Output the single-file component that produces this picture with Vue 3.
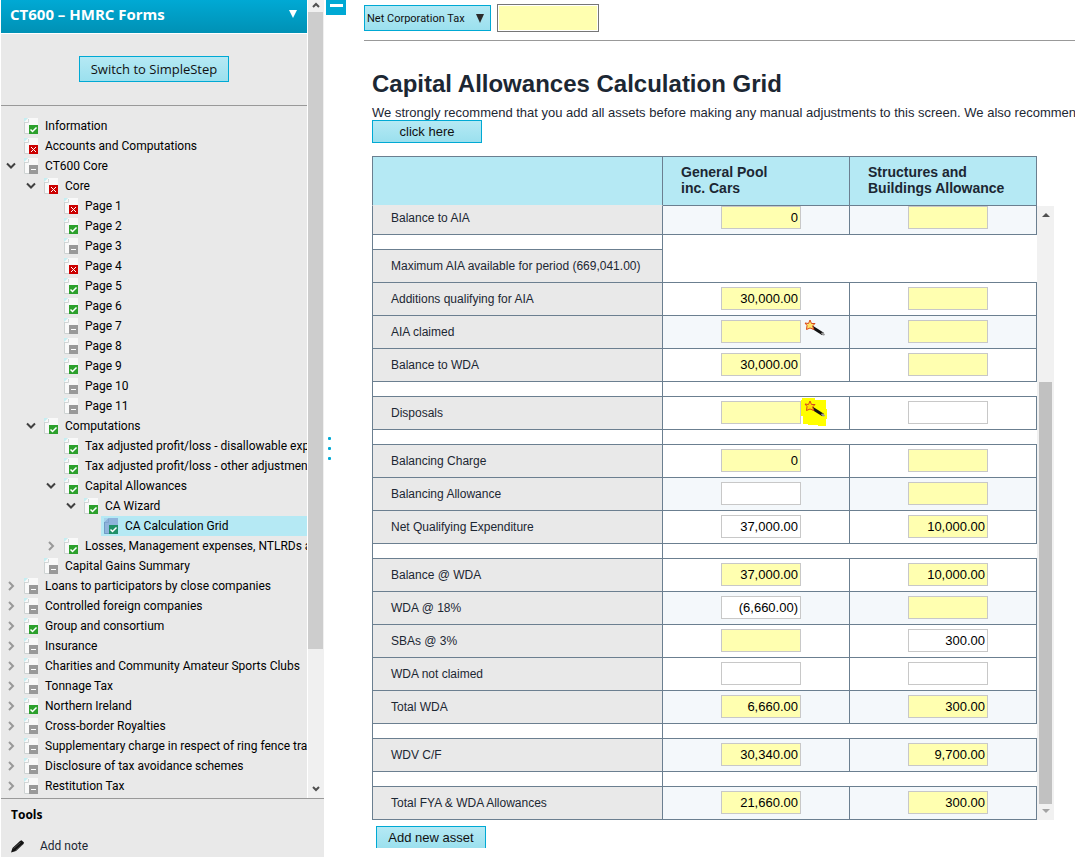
<script setup>
import { ref } from 'vue';

const tree = ref([
  { depth: 0, label: 'Information', status: 'done' },
  { depth: 0, label: 'Accounts and Computations', status: 'error' },
  { depth: 0, label: 'CT600 Core', status: 'none', arrow: 'open' },
  { depth: 1, label: 'Core', status: 'error', arrow: 'open' },
  { depth: 2, label: 'Page 1', status: 'error' },
  { depth: 2, label: 'Page 2', status: 'done' },
  { depth: 2, label: 'Page 3', status: 'none' },
  { depth: 2, label: 'Page 4', status: 'error' },
  { depth: 2, label: 'Page 5', status: 'done' },
  { depth: 2, label: 'Page 6', status: 'done' },
  { depth: 2, label: 'Page 7', status: 'none' },
  { depth: 2, label: 'Page 8', status: 'none' },
  { depth: 2, label: 'Page 9', status: 'done' },
  { depth: 2, label: 'Page 10', status: 'none' },
  { depth: 2, label: 'Page 11', status: 'none' },
  { depth: 1, label: 'Computations', status: 'done', arrow: 'open' },
  { depth: 2, label: 'Tax adjusted profit/loss - disallowable expenses', status: 'done' },
  { depth: 2, label: 'Tax adjusted profit/loss - other adjustments', status: 'done' },
  { depth: 2, label: 'Capital Allowances', status: 'done', arrow: 'open' },
  { depth: 3, label: 'CA Wizard', status: 'done', arrow: 'open' },
  { depth: 4, label: 'CA Calculation Grid', status: 'done', selected: true },
  { depth: 2, label: 'Losses, Management expenses, NTLRDs and', status: 'done', arrow: 'closed' },
  { depth: 1, label: 'Capital Gains Summary', status: 'none' },
  { depth: 0, label: 'Loans to participators by close companies', status: 'none', arrow: 'closed' },
  { depth: 0, label: 'Controlled foreign companies', status: 'none', arrow: 'closed' },
  { depth: 0, label: 'Group and consortium', status: 'done', arrow: 'closed' },
  { depth: 0, label: 'Insurance', status: 'none', arrow: 'closed' },
  { depth: 0, label: 'Charities and Community Amateur Sports Clubs', status: 'none', arrow: 'closed' },
  { depth: 0, label: 'Tonnage Tax', status: 'none', arrow: 'closed' },
  { depth: 0, label: 'Northern Ireland', status: 'done', arrow: 'closed' },
  { depth: 0, label: 'Cross-border Royalties', status: 'none', arrow: 'closed' },
  { depth: 0, label: 'Supplementary charge in respect of ring fence trades', status: 'none', arrow: 'closed' },
  { depth: 0, label: 'Disclosure of tax avoidance schemes', status: 'none', arrow: 'closed' },
  { depth: 0, label: 'Restitution Tax', status: 'none', arrow: 'closed' },
]);

// calc: yellow calculated cells, tint: pale blue row, gap: spacer row
const rows = ref([
  { label: 'Balance to AIA', tint: true, cells: [{ value: '0', calc: true }, { value: '', calc: true }] },
  { gap: true, open: true },
  { label: 'Maximum AIA available for period (669,041.00)', merged: true },
  { label: 'Additions qualifying for AIA', cells: [{ value: '30,000.00', calc: true }, { value: '', calc: true }] },
  { label: 'AIA claimed', tint: true, cells: [{ value: '', calc: true, wand: true }, { value: '', calc: true }] },
  { label: 'Balance to WDA', cells: [{ value: '30,000.00', calc: true }, { value: '', calc: true }] },
  { gap: true },
  { label: 'Disposals', cells: [{ value: '', calc: true, wand: true, marked: true }, { value: '' }] },
  { gap: true },
  { label: 'Balancing Charge', cells: [{ value: '0', calc: true }, { value: '', calc: true }] },
  { label: 'Balancing Allowance', tint: true, cells: [{ value: '' }, { value: '', calc: true }] },
  { label: 'Net Qualifying Expenditure', cells: [{ value: '37,000.00' }, { value: '10,000.00', calc: true }] },
  { gap: true },
  { label: 'Balance @ WDA', cells: [{ value: '37,000.00', calc: true }, { value: '10,000.00', calc: true }] },
  { label: 'WDA @ 18%', tint: true, cells: [{ value: '(6,660.00)' }, { value: '', calc: true }] },
  { label: 'SBAs @ 3%', cells: [{ value: '', calc: true }, { value: '300.00' }] },
  { label: 'WDA not claimed', cells: [{ value: '' }, { value: '' }] },
  { label: 'Total WDA', tint: true, cells: [{ value: '6,660.00', calc: true }, { value: '300.00', calc: true }] },
  { gap: true },
  { label: 'WDV C/F', tint: true, cells: [{ value: '30,340.00', calc: true }, { value: '9,700.00', calc: true }] },
  { gap: true },
  { label: 'Total FYA & WDA Allowances', tint: true, cells: [{ value: '21,660.00', calc: true }, { value: '300.00', calc: true }] },
]);

const columns = ['General Pool inc. Cars', 'Structures and Buildings Allowance'];
</script>

<template>
  <div class="app">
    <aside class="sidebar">
      <div class="sidebar-top">
        <div class="sidebar-body">
          <header class="sidebar-title">
            <h2>CT600 – HMRC Forms</h2>
            <button type="button" class="title-toggle" aria-label="Choose forms">
              <svg width="8" height="8" viewBox="0 0 8 8"><path d="M0 0h8L4 8z" fill="#fff" /></svg>
            </button>
          </header>
          <div class="switch">
            <button type="button" class="btn switch-btn">Switch to SimpleStep</button>
          </div>
          <ul class="tree">
            <li
              v-for="item in tree"
              :key="item.label"
              class="tree-row"
              :style="{ paddingLeft: item.depth * 20 + 'px' }"
            >
              <button
                v-if="item.arrow"
                type="button"
                class="tree-arrow"
                :aria-label="item.label"
                :aria-expanded="item.arrow === 'open'"
              >
                <svg v-if="item.arrow === 'open'" width="10" height="10" viewBox="0 0 10 10">
                  <path d="M1 2.500l4 4 4-4" fill="none" stroke="#404040" stroke-width="2" />
                </svg>
                <svg v-else width="10" height="10" viewBox="0 0 10 10">
                  <path d="M3 1l4 4-4 4" fill="none" stroke="#999" stroke-width="2" />
                </svg>
              </button>
              <span v-else class="tree-arrow"></span>
              <a href="#" class="tree-link" :class="{ selected: item.selected }">
                <svg class="doc" width="14" height="16" viewBox="0 0 14 16" aria-hidden="true">
                  <path d="M4 0h10v16H0V4z" :fill="item.selected ? '#8fb4dc' : '#f9f9f9'" />
                  <path d="M.5 4v11.500H5" fill="none" :stroke="item.selected ? '#6f9cc4' : '#cdd2d2'" />
                  <path d="M0 0h4L0 4z" :fill="item.selected ? '#a8d4ec' : '#c4eef2'" />
                  <path d="M1 4.500h3.500V1" fill="none" :stroke="item.selected ? '#7fa6cf' : '#d2d6d6'" />
                  <g v-if="item.status === 'done'">
                    <path d="M5 7h9v9H5z" :fill="item.selected ? '#1f9067' : '#2ca02c'" />
                    <path d="M6.500 11.500l2 2 4-4" fill="none" stroke="#fff" stroke-width="1.500" />
                  </g>
                  <g v-else-if="item.status === 'error'">
                    <path d="M5 7h9v9H5z" fill="#cc0000" />
                    <path d="M7 9l5 5M12 9l-5 5" stroke="#fff" />
                  </g>
                  <g v-else>
                    <path d="M5 7h9v9H5z" fill="#999" />
                    <path d="M7 11.500h5" stroke="#fff" />
                  </g>
                </svg>
                <span>{{ item.label }}</span>
              </a>
            </li>
          </ul>
        </div>
        <div class="side-scroll" aria-hidden="true">
          <svg class="side-up" width="8" height="6" viewBox="0 0 8 6">
            <path d="M1 5l3-3 3 3" fill="none" stroke="#505050" stroke-width="2" />
          </svg>
          <div class="side-thumb"></div>
          <div class="side-rest"></div>
          <svg class="side-down" width="8" height="6" viewBox="0 0 8 6">
            <path d="M1 1l3 3 3-3" fill="none" stroke="#505050" stroke-width="2" />
          </svg>
        </div>
      </div>
      <div class="tools">
        <h3>Tools</h3>
        <a href="#" class="tool-link">
          <svg width="14" height="13" viewBox="0 0 14 13" aria-hidden="true">
            <path d="M0 12.500l1.500-4.500L9 1l1.500-.8L13 2.500l-.5 1.500L5 11z" fill="#111" />
            <path d="M2.500 8.500L9.500 2.500M4.500 10.500l7-6" stroke="#777" stroke-width=".6" />
          </svg>
          <span>Add note</span>
        </a>
      </div>
    </aside>

    <div class="splitter">
      <button type="button" class="collapse" aria-label="Collapse navigation"><span></span></button>
      <div class="dots"><i></i><i></i><i></i></div>
    </div>

    <main class="main">
      <div class="toolbar">
        <button type="button" class="btn tax-btn">
          Net Corporation Tax
          <svg width="8" height="9" viewBox="0 0 8 9" aria-hidden="true"><path d="M0 0h8L4 9z" fill="#2b2b2b" /></svg>
        </button>
        <input class="tax-value" type="text" aria-label="Net Corporation Tax" />
      </div>

      <section class="content">
        <h1>Capital Allowances Calculation Grid</h1>
        <p class="intro">
          We strongly recommend that you add all assets before making any manual adjustments to this screen. We also recommen
        </p>
        <button type="button" class="btn here-btn">click here</button>

        <div class="grid">
          <table class="grid-head">
            <colgroup><col class="col-label" /><col /><col /></colgroup>
            <thead>
              <tr>
                <th></th>
                <th v-for="column in columns" :key="column" scope="col"><span>{{ column }}</span></th>
              </tr>
            </thead>
          </table>
          <div class="grid-view">
            <table class="grid-body">
              <colgroup><col class="col-label" /><col /><col /></colgroup>
              <tbody>
                <template v-for="(row, index) in rows" :key="index">
                  <tr v-if="row.gap" class="gap" :class="{ open: row.open }">
                    <td></td>
                    <td></td>
                    <td></td>
                  </tr>
                  <tr v-else :class="{ tint: row.tint }">
                    <th scope="row">{{ row.label }}</th>
                    <td v-if="row.merged" class="merged" colspan="2"></td>
                    <template v-else>
                      <td v-for="(cell, c) in row.cells" :key="c">
                        <div class="cell">
                          <input
                            v-model="cell.value"
                            type="text"
                            :class="{ calc: cell.calc }"
                            :aria-label="row.label + ', ' + columns[c]"
                          />
                          <button
                            v-if="cell.wand"
                            type="button"
                            class="wand"
                            :aria-label="row.label + ' wizard'"
                          >
                            <svg width="28" height="31" viewBox="0 0 28 31">
                              <path v-if="cell.marked" d="M2 1h13v2h11v9h1v10h-1v7h-8v-1H8v-1H3v-8H1V3h1z" fill="#ff0" />
                              <path d="M12 11l11 7" stroke="#111" stroke-width="3" />
                              <path d="M21.500 17l3 2" stroke="#999" stroke-width="2" />
                              <path
                                d="M10 4l1.500 3.500H15l-2.500 2.500 1.500 3.500-4-1.500-3.500 1.500.5-4L5 7l3.500.5z"
                                :fill="cell.marked ? '#ffe000' : '#ffe36a'"
                                stroke="#d9481c"
                                stroke-width="1"
                              />
                            </svg>
                          </button>
                        </div>
                      </td>
                    </template>
                  </tr>
                </template>
              </tbody>
            </table>
            <div class="grid-scroll" aria-hidden="true">
              <svg width="8" height="4" viewBox="0 0 8 4"><path d="M0 4h8L4 0z" fill="#505050" /></svg>
              <div class="grid-thumb"></div>
              <svg width="8" height="4" viewBox="0 0 8 4"><path d="M0 0h8L4 4z" fill="#a3a3a3" /></svg>
            </div>
          </div>
        </div>

        <button type="button" class="btn add-btn">Add new asset</button>
      </section>
    </main>
  </div>
</template>

<style>
body {
  margin: 0;
  background: #fff;
}
</style>

<style scoped>
* {
  box-sizing: border-box;
}

.app {
  display: flex;
  height: 100vh;
  min-height: 600px;
  overflow: hidden;
  font-family: "Liberation Sans", Arial, sans-serif;
  color: #1c2733;
}

button {
  font-family: inherit;
  padding: 0;
  cursor: pointer;
}

h1,
h2,
h3,
p,
ul {
  margin: 0;
  padding: 0;
}

.btn {
  border: 1px solid #00a9d4;
  background: linear-gradient(#b5e9f4, #9be0ee);
  color: #111;
}

/* sidebar */
.sidebar {
  flex: 0 0 323px;
  min-width: 0;
  margin-left: 1px;
  display: flex;
  flex-direction: column;
  background: #e9e9e9;
  font-family: "Open Sans", "Noto Sans", sans-serif;
}

.sidebar-top {
  flex: 1;
  min-height: 0;
  display: flex;
}

.sidebar-body {
  flex: 1;
  min-width: 0;
  overflow: hidden;
  border-right: 1px solid #fff;
}

.sidebar-title {
  display: flex;
  align-items: center;
  justify-content: space-between;
  height: 34px;
  padding: 0 10px 6px 9px;
  border-bottom: 1px solid #fff;
  background: linear-gradient(#00a9d4, #0091b5);
  color: #fff;
}

.sidebar-title h2 {
  font-size: 15px;
  font-weight: 700;
}

.title-toggle {
  display: flex;
  border: 0;
  background: none;
}

.switch {
  display: flex;
  justify-content: center;
  height: 72px;
  padding-top: 22px;
  border-bottom: 1px solid #999;
}

.switch-btn {
  width: 150px;
  height: 26px;
  font-size: 13px;
}

.tree {
  padding-top: 10px;
  list-style: none;
}

.tree-row {
  display: flex;
  height: 20px;
}

.tree-arrow {
  flex: 0 0 20px;
  display: flex;
  align-items: center;
  justify-content: center;
  border: 0;
  background: none;
}

.tree-link {
  flex: 1;
  min-width: 0;
  display: flex;
  gap: 7px;
  padding-left: 3px;
  color: #000;
  font-family: Roboto, "Open Sans", sans-serif;
  font-size: 12px;
  line-height: 20px;
  white-space: nowrap;
  text-decoration: none;
}

.tree-link.selected {
  background: #b5e9f4;
}

.doc {
  flex-shrink: 0;
  margin-top: 2px;
}

.side-scroll {
  flex: 0 0 16px;
  display: flex;
  flex-direction: column;
  align-items: center;
  background: #f0f0f0;
}

.side-up {
  flex-shrink: 0;
  margin: 2px 0 4px;
}

.side-thumb {
  flex: 637;
  align-self: stretch;
  margin-right: 1px;
  background: #cdcdcd;
}

.side-rest {
  flex: 137;
}

.side-down {
  flex-shrink: 0;
  margin-bottom: 6px;
}

.tools {
  flex: 0 0 59px;
  padding: 8px 10px 0;
  border-top: 1px solid #999;
}

.tools h3 {
  color: #000;
  font-size: 12px;
  line-height: 16px;
}

.tool-link {
  display: flex;
  align-items: center;
  gap: 15px;
  margin-top: 15px;
  color: #1c2733;
  font-family: Roboto, "Open Sans", sans-serif;
  font-size: 12px;
  line-height: 16px;
  text-decoration: none;
}

/* splitter */
.splitter {
  flex: 0 0 24px;
  display: flex;
  flex-direction: column;
  padding-left: 2px;
}

.collapse {
  display: flex;
  justify-content: center;
  width: 20px;
  height: 15px;
  padding-top: 4px;
  border: 0;
  background: #00a9d4;
}

.collapse span {
  width: 13px;
  height: 3px;
  background: #fff;
}

.dots {
  flex: 1;
  display: flex;
  flex-direction: column;
  justify-content: center;
  gap: 7px;
  padding: 24px 0 0 2px;
}

.dots i {
  width: 3px;
  height: 3px;
  border-radius: 1px;
  background: #00a9d4;
}

/* main */
.main {
  flex: 1;
  min-width: 0;
  padding-left: 16px;
  overflow: hidden;
}

.toolbar {
  display: flex;
  gap: 6px;
  height: 41px;
  padding-top: 4px;
  border-bottom: 1px solid #999;
}

.tax-btn {
  display: flex;
  align-items: center;
  justify-content: space-between;
  width: 127px;
  height: 26px;
  margin-top: 1px;
  padding: 0 6px 0 2px;
  font-family: Roboto, "Open Sans", sans-serif;
  font-size: 11px;
}

.tax-value {
  width: 102px;
  height: 28px;
  border: 1px solid #767676;
  padding: 1px;
  background: #ffffb0;
  background-clip: content-box;
}

.content {
  padding-left: 8px;
}

h1 {
  margin-top: 27px;
  font-size: 24px;
  line-height: 32px;
  white-space: nowrap;
}

.intro {
  margin-top: 5px;
  font-size: 13px;
  line-height: 16px;
  white-space: nowrap;
}

.here-btn,
.add-btn {
  display: block;
  width: 110px;
  height: 23px;
  font-size: 13px;
}

.here-btn {
  margin-top: -1px;
}

.grid {
  margin: 13px 21px 0 0;
}

table {
  width: 100%;
  border-collapse: separate;
  border-spacing: 0;
  table-layout: fixed;
}

.col-label {
  width: 291px;
}

.grid-head {
  width: calc(100% - 17px);
}

.grid-head th {
  height: 50px;
  padding: 0 18px 2px;
  border: 1px solid #6b7f90;
  border-left: 0;
  background: #b5e9f4;
  font-size: 14px;
  line-height: 16px;
  text-align: left;
}

.grid-head th:first-child {
  border-left: 1px solid #6b7f90;
  border-bottom-color: #e9e9e9;
}

.grid-head span {
  display: block;
  max-width: 140px;
}

.grid-head th:nth-child(2) span {
  max-width: 100px;
}

.grid-view {
  display: flex;
  overflow: hidden;
}

.grid-body {
  flex: 1;
  margin-top: -4px;
}

.grid-body th {
  height: 33px;
  padding: 0 0 0 18px;
  border: 1px solid #6b7f90;
  border-top: 0;
  background: #e9e9e9;
  font-size: 12px;
  font-weight: 400;
  text-align: left;
  white-space: nowrap;
}

.grid-body td {
  padding: 0;
  border-right: 1px solid #6b7f90;
  border-bottom: 1px solid #6b7f90;
}

.tint td {
  background: #f4f8fb;
}

.grid-body .merged {
  border-right: 0;
}

.gap td {
  height: 15px;
  border-right: 0;
}

.gap td:first-child {
  border-left: 1px solid #6b7f90;
  border-right: 1px solid #6b7f90;
}

.gap.open td + td {
  border-bottom: 0;
}

.cell {
  position: relative;
  display: flex;
  padding: 4px 0 5px 58px;
}

.cell input {
  width: 80px;
  height: 23px;
  padding: 0 2px;
  border: 1px solid #c8c8c8;
  background: #fff;
  color: #000;
  font-family: "Liberation Sans", Arial, sans-serif;
  font-size: 13px;
  text-align: right;
}

.cell input.calc {
  background: #ffffb0;
}

.wand {
  position: absolute;
  top: 0;
  left: 137px;
  border: 0;
  background: none;
}

.wand svg {
  display: block;
}

.grid-scroll {
  flex: 0 0 17px;
  display: flex;
  flex-direction: column;
  align-items: center;
  padding: 7px 0;
  background: #f1f1f1;
}

.grid-scroll svg {
  flex-shrink: 0;
}

.grid-thumb {
  flex: 1;
  width: 13px;
  margin: 165px 0 5px;
  background: #c1c1c1;
}

.add-btn {
  height: 22px;
  margin: 6px 0 0 4px;
  border-bottom: 0;
}
</style>
